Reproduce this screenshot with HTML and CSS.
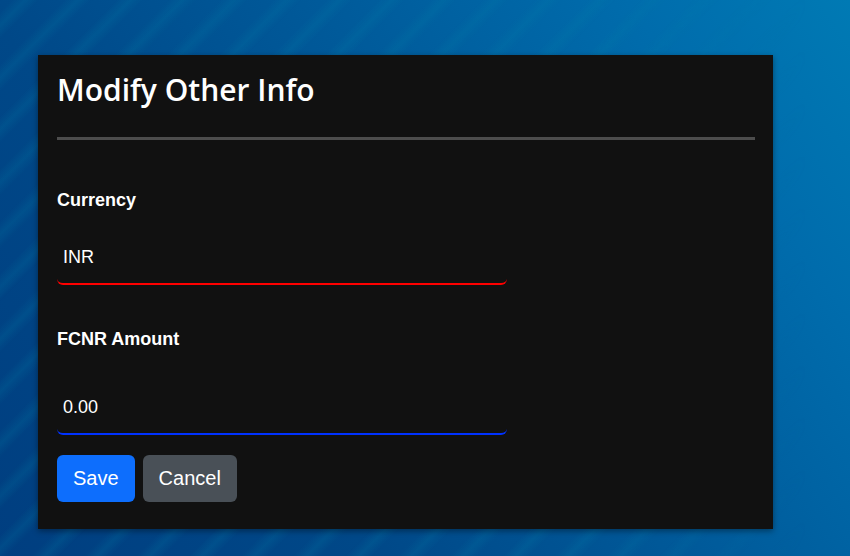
FILE: index.html
```html
<!DOCTYPE html>
<html lang="en">
<head>
  <meta charset="utf-8">
  <meta name="viewport" content="width=device-width, initial-scale=1">
  <title>Modify Other Info</title>
  <link rel="stylesheet" href="styles.css">
</head>
<body>
  <main class="page">
    <form class="card">
      <h1 class="card-title">Modify Other Info</h1>
      <hr class="divider">
      <div class="field">
        <label for="currency">Currency</label>
        <input class="input input-required" id="currency" type="text" value="INR">
      </div>
      <div class="field field-amount">
        <label for="amount">FCNR Amount</label>
        <input class="input" id="amount" type="text" inputmode="decimal" value="0.00">
      </div>
      <div class="actions">
        <button class="btn btn-primary" type="button">Save</button>
        <button class="btn btn-secondary" type="button">Cancel</button>
      </div>
    </form>
  </main>
</body>
</html>
```

FILE: styles.css
```css
* {
  box-sizing: border-box;
}

body {
  margin: 0;
  color: #fff;
  font-family: "Liberation Sans", Arial, sans-serif;
  font-size: 18px;
}

.page {
  position: relative;
  isolation: isolate;
  min-height: 100vh;
  padding: 55px 77px 27px 38px;
  background: linear-gradient(55deg, #003e80 0%, #004888 30%, #005c9c 60%, #006cac 82%, #007ab4 100%);
}

/* Diagonal light bands that fade out towards the right */
.page::before {
  content: "";
  position: absolute;
  inset: 0;
  z-index: -1;
  background: repeating-linear-gradient(135deg, transparent 0, transparent 8px, rgba(0, 130, 170, 0.2) 18px, transparent 28px, transparent 37px);
  mask-image: linear-gradient(to right, #000 70%, transparent 95%);
}

.card {
  padding: 16px 18px 27px 19px;
  background: #111;
  box-shadow: 0 2px 6px rgba(0, 0, 0, 0.4);
}

.card-title {
  margin: 0;
  font-family: "Segoe UI", "Open Sans", sans-serif;
  font-size: 30px;
  font-weight: 600;
  line-height: 38px;
}

.divider {
  height: 3px;
  margin: 28px 0 48px;
  border: 0;
  background: #4d4d4d;
}

.field {
  display: flex;
  flex-direction: column;
  gap: 20px;
  max-width: 450px;
  margin-bottom: 42px;
}

.field-amount {
  gap: 31px;
  margin-bottom: 20px;
}

.field label {
  font-weight: 700;
  line-height: 24px;
}

.input {
  width: 100%;
  height: 53px;
  padding: 0 6px;
  border: 0;
  border-bottom: 2px solid #0032ff;
  border-radius: 6px;
  background: transparent;
  color: #fff;
  font: inherit;
  outline: 0;
}

.input-required {
  border-bottom-color: #f00;
}

.actions {
  display: flex;
  gap: 8px;
}

.btn {
  padding: 8px 16px;
  border: 0;
  border-radius: 6px;
  color: #fff;
  font: inherit;
  font-size: 20px;
  line-height: 31px;
}

.btn-primary {
  background: #0d6efd;
}

.btn-secondary {
  background: #495057;
}
```
